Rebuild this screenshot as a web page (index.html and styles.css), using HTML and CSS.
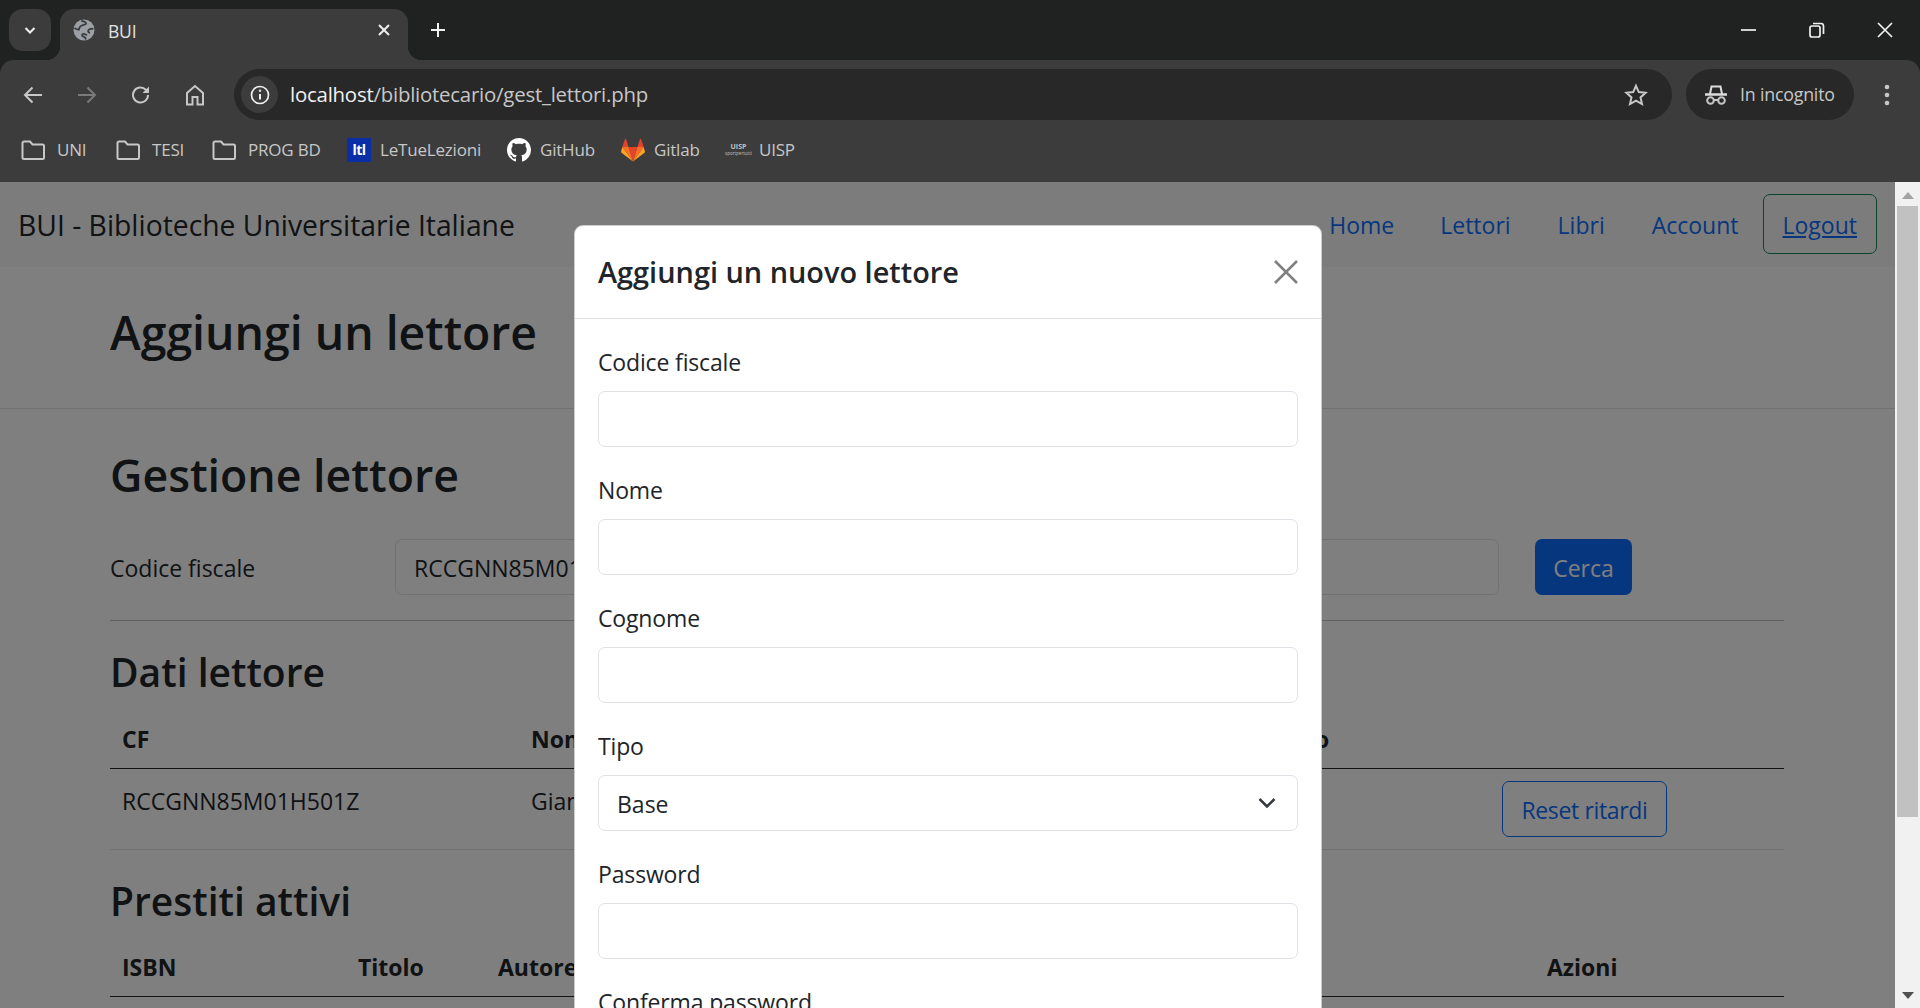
FILE: index.html
```html
<!DOCTYPE html>
<html lang="it">
<head>
<meta charset="utf-8">
<title>BUI</title>
<link rel="stylesheet" href="styles.css">
</head>
<body>
<header class="browser">
  <div class="tabstrip">
    <div class="tabsearch"><svg width="16" height="16" viewBox="0 0 16 16"><path d="M3.500 6l4.500 4.500L12.500 6" class="ln-w"/></svg></div>
    <div class="tab">
      <svg class="globe" width="22" height="22" viewBox="0 0 22 22"><circle cx="11" cy="11" r="10.500" fill="#9aa0a6"/><path d="M8.500 1.500c1.500 1.500 4 1 4.500 2.500.5 1.800-2 1.700-4 2.500-2.500 1-3 2.500-3 4-2 .3-3-.5-4.500-1.500M20.500 10c-2-.5-4-.2-5 1-1 1.300 0 2.500 1.500 3M13 20.500c-.3-1.800-1.300-2.700-2.800-3.200-1.500-.6-1.500-1.800-.3-2.300 1.500-.5 3 .4 4 1.500" fill="none" stroke="#3c3c3c" stroke-width="1.800"/></svg>
      <span class="tabtitle">BUI</span>
      <svg class="tabclose" width="14" height="14" viewBox="0 0 14 14"><path d="M2 2l10 10M12 2L2 12" class="ln-w"/></svg>
    </div>
    <svg class="newtab" width="18" height="18" viewBox="0 0 18 18"><path d="M9 2v14M2 9h14" class="ln-w"/></svg>
    <div class="winctl">
      <svg width="16" height="16" viewBox="0 0 16 16"><path d="M0 8h15" class="ln-w thin"/></svg>
      <svg width="16" height="16" viewBox="0 0 16 16"><rect x="1" y="4" width="10" height="11" rx="2" class="ln-w thin"/><path d="M4 1.500h8a2.500 2.500 0 0 1 2.500 2.500v8" class="ln-w thin"/></svg>
      <svg width="16" height="16" viewBox="0 0 16 16"><path d="M1 1l14 14M15 1L1 15" class="ln-w thin"/></svg>
    </div>
  </div>
  <div class="toolbar">
    <div class="navicons">
      <svg width="20" height="20" viewBox="0 0 20 20"><path d="M19 10H2M9.500 2.500L2 10l7.500 7.500" class="ln-g"/></svg>
      <svg width="20" height="20" viewBox="0 0 20 20"><path d="M1 10h17M10.500 2.500L18 10l-7.500 7.500" class="ln-g dim"/></svg>
      <svg width="20" height="20" viewBox="0 0 20 20"><path d="M17 10a7.500 7.500 0 1 1-2.200-5.300L17 7" class="ln-g"/><path d="M18 1.500V8h-6.500z" fill="#c7c7c7"/></svg>
      <svg width="20" height="22" viewBox="0 0 20 22"><path d="M2 20.500V9L10 2l8 7v11.500h-5.500V13h-5v7.500z" class="ln-g"/></svg>
    </div>
    <div class="omnibox">
      <span class="infochip"><svg width="20" height="20" viewBox="0 0 20 20"><circle cx="10" cy="10" r="8.500" class="ln-w thin"/><path d="M10 9v5.500" class="ln-w"/><circle cx="10" cy="5.800" r="1.200" fill="#e3e3e3"/></svg></span>
      <span class="url"><span class="host">localhost</span>/bibliotecario/gest_lettori.php</span>
      <svg class="star" width="24" height="24" viewBox="0 0 24 24"><path d="M12 2.800l2.800 6.300 6.800.7-5.100 4.600 1.500 6.700-6-3.500-6 3.500 1.500-6.700-5.100-4.600 6.800-.7z" class="ln-g"/></svg>
    </div>
    <div class="incognito">
      <svg width="24" height="22" viewBox="0 0 24 22"><path d="M6 10l1.500-7.500h9L18 10" fill="none" stroke="#dcdcdc" stroke-width="2"/><path d="M1 10.500h22" stroke="#dcdcdc" stroke-width="2.500"/><circle cx="6.500" cy="16.500" r="3.300" class="ln-g"/><circle cx="17.500" cy="16.500" r="3.300" class="ln-g"/><path d="M9.500 16h5" class="ln-g"/></svg>
      <span class="incognito-label">In incognito</span>
    </div>
    <svg class="dots" width="6" height="24" viewBox="0 0 6 24"><circle cx="3" cy="4" r="2.300" fill="#c7c7c7"/><circle cx="3" cy="12" r="2.300" fill="#c7c7c7"/><circle cx="3" cy="20" r="2.300" fill="#c7c7c7"/></svg>
  </div>
  <div class="bookmarks">
    <div class="bm bm-uni"><svg width="24" height="22" viewBox="0 0 24 22"><use href="#folder"/></svg><span>UNI</span></div>
    <div class="bm bm-tesi"><svg width="24" height="22" viewBox="0 0 24 22"><use href="#folder"/></svg><span>TESI</span></div>
    <div class="bm bm-prog"><svg width="24" height="22" viewBox="0 0 24 22"><use href="#folder"/></svg><span>PROG BD</span></div>
    <div class="bm bm-ltl"><i class="ltl">ltl</i><span>LeTueLezioni</span></div>
    <div class="bm bm-gh"><svg width="24" height="24" viewBox="0 0 16 16"><path fill="#fff" d="M8 0C3.580 0 0 3.580 0 8c0 3.540 2.290 6.530 5.470 7.590.4.070.55-.17.55-.38 0-.19-.01-.82-.01-1.490-2.010.37-2.530-.49-2.690-.94-.09-.23-.48-.94-.82-1.130-.28-.15-.68-.52-.01-.53.63-.01 1.080.58 1.230.82.72 1.210 1.870.87 2.330.66.07-.52.28-.87.51-1.070-1.780-.2-3.640-.89-3.640-3.950 0-.87.31-1.590.82-2.150-.08-.2-.36-1.020.08-2.120 0 0 .67-.21 2.200.82.64-.18 1.320-.27 2-.27s1.360.09 2 .27c1.530-1.040 2.200-.82 2.200-.82.44 1.100.16 1.920.08 2.120.51.56.82 1.270.82 2.150 0 3.070-1.870 3.750-3.650 3.950.29.25.54.73.54 1.480 0 1.070-.01 1.930-.01 2.200 0 .21.15.46.55.38A8.013 8.013 0 0016 8c0-4.420-3.580-8-8-8z"/></svg><span>GitHub</span></div>
    <div class="bm bm-gl"><svg width="24" height="24" viewBox="0 0 24 24"><path d="M12 23.500L16.400 9H7.600z" fill="#e24329"/><path d="M12 23.500L7.600 9H1.300z" fill="#fc6d26"/><path d="M12 23.500L16.400 9h6.300z" fill="#fc6d26"/><path d="M1.300 9L.1 13.500c-.1.500 0 .9.400 1.200L12 23.500z" fill="#fca326"/><path d="M22.700 9l1.200 4.500c.1.500 0 .9-.4 1.200L12 23.500z" fill="#fca326"/><path d="M1.300 9h6.300L5 1c-.2-.5-.8-.5-1 0z" fill="#e24329"/><path d="M22.700 9h-6.300L19 1c.2-.5.8-.5 1 0z" fill="#e24329"/></svg><span>Gitlab</span></div>
    <div class="bm bm-uisp"><span class="uisp"><b>UISP</b><small>sportpertutti</small></span><span>UISP</span></div>
  </div>
  <svg class="defs" width="0" height="0"><defs><path id="folder" d="M1.500 18.500V4a1.500 1.500 0 0 1 1.500-1.500h6l2.500 3h10A1.500 1.500 0 0 1 23 7v11.500A1.500 1.500 0 0 1 21.500 20H3a1.500 1.500 0 0 1-1.500-1.500z" fill="none" stroke="#c7c7c7" stroke-width="2"/></defs></svg>
</header>

<div class="viewport">
  <div class="page">
    <nav class="navbar">
      <a class="brand">BUI - Biblioteche Universitarie Italiane</a>
      <div class="navlinks">
        <a class="navlink">Home</a>
        <a class="navlink">Lettori</a>
        <a class="navlink">Libri</a>
        <a class="navlink">Account</a>
        <a class="logout">Logout</a>
      </div>
    </nav>
    <section class="pagehead"><h1 class="container">Aggiungi un lettore</h1></section>
    <main class="container">
      <h2 class="section-title">Gestione lettore</h2>
      <form class="search">
        <label class="search-label">Codice fiscale</label>
        <input class="search-input" value="RCCGNN85M01H501Z">
        <button type="button" class="btn-primary">Cerca</button>
      </form>
      <hr class="rule">
      <h3 class="sub-title first">Dati lettore</h3>
      <table class="datatable">
        <colgroup><col class="c1a"><col class="c1b"><col class="c1c"><col class="c1d"><col class="c1e"></colgroup>
        <thead><tr><th>CF</th><th>Nome</th><th></th><th>Tipo</th><th></th></tr></thead>
        <tbody><tr><td>RCCGNN85M01H501Z</td><td>Gianni</td><td></td><td></td><td class="action"><button type="button" class="btn-outline">Reset ritardi</button></td></tr></tbody>
      </table>
      <h3 class="sub-title">Prestiti attivi</h3>
      <table class="datatable">
        <colgroup><col class="c2a"><col class="c2b"><col class="c2c"><col class="c2d"></colgroup>
        <thead><tr><th>ISBN</th><th>Titolo</th><th>Autore</th><th>Azioni</th></tr></thead>
      </table>
    </main>
    <div class="backdrop"></div>
    <div class="modal">
      <div class="modal-header">
        <h4 class="modal-title">Aggiungi un nuovo lettore</h4>
        <svg class="modal-close" width="24" height="24" viewBox="0 0 24 24"><path d="M1 1l22 22M23 1L1 23"/></svg>
      </div>
      <div class="modal-body">
        <div class="field"><label class="field-label">Codice fiscale</label><input class="field-input"></div>
        <div class="field"><label class="field-label">Nome</label><input class="field-input"></div>
        <div class="field"><label class="field-label">Cognome</label><input class="field-input"></div>
        <div class="field"><label class="field-label">Tipo</label>
          <div class="select-wrap"><select class="field-input field-select"><option>Base</option></select>
          <svg class="chevron" width="18" height="12" viewBox="0 0 18 12"><path d="M1.500 2l7.500 7.500L16.500 2"/></svg></div>
        </div>
        <div class="field"><label class="field-label">Password</label><input class="field-input"></div>
        <div class="field"><label class="field-label">Conferma password</label><input class="field-input"></div>
      </div>
    </div>
  </div>
  <div class="scrollbar">
    <i class="arrow-up"></i>
    <div class="track"><div class="thumb"></div></div>
    <i class="arrow-down"></i>
  </div>
</div>
</body>
</html>
```

FILE: styles.css
```css
* { box-sizing: border-box; }
html, body { margin: 0; height: 1008px; overflow: hidden; }
body { display: flex; flex-direction: column; font-family: "Open Sans", "Noto Sans", sans-serif; color: #212529; background: #fff; }

/* browser chrome */
.browser { height: 182px; flex: none; background: #202221; color: #e3e3e3; display: flex; flex-direction: column; }
.defs { position: absolute; }
.ln-w { fill: none; stroke: #f0f0f0; stroke-width: 2; }
.ln-w.thin { stroke-width: 1.700; }
.ln-g { fill: none; stroke: #c7c7c7; stroke-width: 2; }
.ln-g.dim { stroke: #7a7a7a; }

.tabstrip { height: 60px; display: flex; align-items: flex-start; padding: 9px 0 0 9px; }
.tabsearch { width: 42px; height: 42px; border-radius: 14px; background: #3c3c3c; display: flex; align-items: center; justify-content: center; margin-right: 9px; }
.tab { position: relative; width: 348px; height: 51px; background: #3c3c3c; border-radius: 14px 14px 0 0; display: flex; align-items: center; padding: 0 17px 9px 13px; }
.tab::before, .tab::after { content: ""; position: absolute; bottom: 0; width: 14px; height: 14px; }
.tab::before { left: -14px; background: radial-gradient(circle at 0 0, transparent 14px, #3c3c3c 14.500px); }
.tab::after { right: -14px; background: radial-gradient(circle at 100% 0, transparent 14px, #3c3c3c 14.500px); }
.globe { flex: none; }
.tabtitle { margin-left: 13px; padding-top: 2px; font-size: 17.500px; letter-spacing: -.2px; flex: 1; color: #e3e3e3; }
.newtab { margin: 12px 0 0 21px; }
.winctl { margin-left: auto; display: flex; gap: 52px; padding: 13px 27px 0 0; }

.toolbar { height: 60px; background: #3c3c3c; border-radius: 14px 14px 0 0; display: flex; align-items: flex-start; padding: 9px 0 0 23px; }
.navicons { display: flex; gap: 34px; align-items: center; height: 51px; width: 211px; }
.omnibox { width: 1438px; height: 51px; background: #282828; border-radius: 26px; display: flex; align-items: center; padding: 0 24px 0 7px; }
.infochip { width: 37px; height: 37px; border-radius: 50%; background: #3c3c3c; display: flex; align-items: center; justify-content: center; flex: none; }
.url { margin-left: 12px; padding-bottom: 2px; font-size: 20.400px; letter-spacing: -.22px; flex: 1; color: #c7c7c7; }
.host { color: #f1f1f1; }
.incognito { margin-left: 14px; width: 168px; height: 51px; background: #282828; border-radius: 26px; display: flex; align-items: center; padding-left: 18px; gap: 12px; font-size: 17.800px; letter-spacing: -.2px; color: #c7c7c7; }
.incognito-label { padding-bottom: 2px; }
.dots { margin: 14px 0 0 30px; }

.bookmarks { height: 62px; background: #3c3c3c; display: flex; align-items: flex-start; padding: 18px 0 0 21px; font-size: 17px; letter-spacing: -.2px; color: #c7c7c7; }
.bm { display: flex; align-items: center; height: 24px; gap: 12px; white-space: nowrap; }
.bm span { padding-bottom: 2px; }
.bm-uni { width: 95px; }
.bm-tesi { width: 96px; }
.bm-prog { width: 135px; }
.bm-ltl { width: 160px; gap: 9px; }
.bm-gh { width: 114px; gap: 9px; }
.bm-gl { width: 106px; gap: 9px; }
.bm-uisp { gap: 9px; }
.ltl { width: 24px; height: 24px; background: #0a2ea6; color: #fff; font: normal 700 14px/24px "Open Sans", sans-serif; letter-spacing: -.5px; text-align: center; flex: none; }
.bm .uisp { width: 23px; padding: 0; display: flex; flex-direction: column; align-items: center; color: #c0c0c0; line-height: 7px; letter-spacing: 0; }
.uisp b { font-size: 7px; }
.uisp small { font-size: 4.500px; }

/* page */
.viewport { flex: 1; display: flex; min-height: 0; }
.page { flex: 1; position: relative; overflow: hidden; background: #fff; font-size: 23px; line-height: 36px; }
.backdrop { position: absolute; inset: 0; background: rgba(0, 0, 0, .5); }
.container { width: 1674px; margin-left: 110px; }

.navbar { height: 85px; background: #f8f9fa; display: flex; align-items: center; justify-content: space-between; padding: 0 18px; }
.brand { font-size: 28.300px; color: #212529; }
.navlinks { display: flex; align-items: center; color: #0d6efd; }
.navlink { padding: 0 23.500px; }
.navlink:nth-child(4) { padding-right: 24px; }
.navlink:first-child { margin-right: -1px; }
.logout { padding: 0 19px; height: 60px; line-height: 60px; margin-top: -2px; border: 1px solid #198754; border-radius: 7px; text-decoration: underline; }

.pagehead { height: 142px; padding-top: 40px; border-bottom: 1px solid #dee2e6; }
.pagehead h1 { margin-top: 0; margin-bottom: 0; font-size: 46.400px; font-weight: 600; line-height: 50px; }
.section-title { margin: 41px 0 0; font-size: 44.700px; font-weight: 600; line-height: 50px; }
.search { display: flex; align-items: center; margin-top: 39px; }
.search-label { width: 285px; padding-top: 2px; }
.search-input { width: 1104px; height: 56px; border: 1px solid #dee2e6; border-radius: 7px; padding: 2px 18px 0; font: inherit; color: #212529; background: #fff; }
.btn-primary { margin-left: 36px; width: 97px; height: 56px; border: 0; border-radius: 7px; background: #0d6efd; color: #fff; font: inherit; padding: 2px 0 0; }
.rule { margin: 25px 0 0; border: 0; border-top: 1px solid rgba(0, 0, 0, .25); }
.sub-title { margin: 29px 0 14px; font-size: 39px; font-weight: 600; line-height: 43px; }
.sub-title.first { margin: 29px 0 15px; }
.datatable { width: 100%; table-layout: fixed; border-collapse: collapse; }
.datatable th { text-align: left; padding: 13px 12px 11px; border-bottom: 1px solid #212529; font-weight: 700; white-space: nowrap; }
.datatable td { vertical-align: top; padding: 14px 12px 10px; border-bottom: 1px solid #dee2e6; white-space: nowrap; }
.datatable td.action { padding: 12px; }
.c1a { width: 409px; } .c1b { width: 375px; } .c1c { width: 374px; } .c1d { width: 222px; } .c1e { width: 294px; }
.c2a { width: 236px; } .c2b { width: 140px; } .c2c { width: 1049px; } .c2d { width: 249px; }
.btn-outline { height: 56px; width: 165px; padding: 2px 0 0; border: 1px solid #0d6efd; border-radius: 7px; background: transparent; color: #0d6efd; font: inherit; letter-spacing: -.35px; }

/* modal */
.modal { position: absolute; top: 43px; left: 574px; width: 748px; background: #fff; border: 1px solid rgba(0, 0, 0, .2); border-radius: 9px; }
.modal-header { height: 93px; display: flex; align-items: center; justify-content: space-between; padding: 0 23px; border-bottom: 1px solid #dee2e6; }
.modal-title { margin: 0; font-size: 28.900px; font-weight: 600; line-height: 44px; }
.modal-close { fill: none; stroke: #808080; stroke-width: 2.500; }
.modal-body { padding: 20px 23px 24px; }
.field { margin-bottom: 20px; }
.field-label { display: block; height: 52px; line-height: 46px; letter-spacing: -.15px; }
.field-input { display: block; width: 100%; height: 56px; padding: 0 18px; border: 1px solid #dee2e6; border-radius: 7px; background: #fff; color: #212529; font: inherit; }
.select-wrap { position: relative; }
.field-select { appearance: none; -webkit-appearance: none; padding-top: 2px; }
.chevron { position: absolute; right: 22px; top: 22px; fill: none; stroke: #343a40; stroke-width: 2.500; }

/* scrollbar */
.scrollbar { flex: none; width: 25px; background: #f1f1f1; display: flex; flex-direction: column; align-items: center; }
.arrow-up { margin-top: 10px; border: 6px solid transparent; border-top: 0; border-bottom: 7px solid #a3a3a3; border-left-width: 6px; }
.track { flex: 1; width: 100%; padding: 7px 2px 0; }
.thumb { height: 611px; background: #c1c1c1; }
.arrow-down { margin-bottom: 9px; border: 6px solid transparent; border-bottom: 0; border-top: 7px solid #505050; }
```
